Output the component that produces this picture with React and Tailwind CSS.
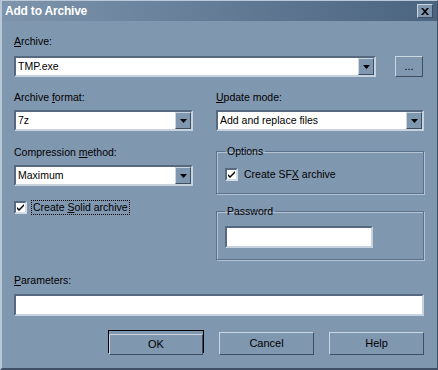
import { useState } from "react";

const font = { fontFamily: '"Liberation Sans", Arial, sans-serif' };

function Label({ children, className = "" }) {
  return (
    <div className={`h-[13px] leading-[13px] text-[10.5px] text-black ${className}`}>{children}</div>
  );
}

function Arrow() {
  return (
    <div className="w-[16px] h-full bg-[#8097b0] border border-t-[#c9d5e1] border-l-[#c9d5e1] border-b-[#3f4f62] border-r-[#3f4f62] flex items-center justify-center">
      <svg width="7" height="4" viewBox="0 0 7 4">
        <path d="M0 0h7L3.5 4z" fill="#000" />
      </svg>
    </div>
  );
}

function Combo({ value, className = "" }) {
  return (
    <div
      className={`h-[21px] bg-white border-2 border-t-[#56697f] border-l-[#56697f] border-b-[#c6d2de] border-r-[#c6d2de] flex items-stretch ${className}`}
    >
      <div className="flex-1 px-[2px] text-[10.5px] leading-[17px] text-black">{value}</div>
      <Arrow />
    </div>
  );
}

function TextBox({ className = "" }) {
  return (
    <div
      className={`h-[22px] bg-white border-2 border-t-[#56697f] border-l-[#56697f] border-b-[#c6d2de] border-r-[#c6d2de] ${className}`}
    />
  );
}

function Check({ checked, onChange }) {
  return (
    <button
      onClick={onChange}
      className="w-[13px] h-[13px] bg-white border-2 border-t-[#56697f] border-l-[#56697f] border-b-[#d2dce6] border-r-[#d2dce6] flex items-center justify-center"
    >
      {checked && (
        <svg width="9" height="9" viewBox="0 0 9 9">
          <path d="M1 4l2 2 5-5v2L3 8 1 6z" fill="#000" />
        </svg>
      )}
    </button>
  );
}

function Button({ children, isDefault }) {
  return (
    <div className={`h-[23px] ${isDefault ? "border border-black w-[96px]" : "w-[95px]"}`}>
      <button className="w-full h-full bg-[#8097b0] border border-t-[#c9d5e1] border-l-[#c9d5e1] border-b-[#3f4f62] border-r-[#3f4f62] text-[11px] text-black leading-none">
        {children}
      </button>
    </div>
  );
}

export default function App() {
  const [solid, setSolid] = useState(true);
  const [sfx, setSfx] = useState(true);

  return (
    <div
      style={font}
      className="w-[438px] h-[370px] bg-[#8097b0] flex flex-col border-l-2 border-t border-l-[#b9c8d8] border-t-[#b9c8d8] border-r border-r-[#3f5066] border-b-2 border-b-[#3f5066]"
    >
      <div className="h-[20px] shrink-0 bg-gradient-to-r from-[#7d94ac] to-[#4b6480] flex items-center justify-between pl-[3px] pr-[4px]">
        <span className="text-white font-bold text-[12px] tracking-[-0.2px]">Add to Archive</span>
        <div className="w-[16px] h-[14px] bg-[#8097b0] border border-t-[#c9d5e1] border-l-[#c9d5e1] border-b-[#3f4f62] border-r-[#3f4f62] flex items-center justify-center">
          <svg width="8" height="7" viewBox="0 0 8 7">
            <path d="M0 0h2l2 2.3L6 0h2L5 3.5 8 7H6L4 4.7 2 7H0l3-3.5z" fill="#000" />
          </svg>
        </div>
      </div>

      <div className="flex-1 pl-[12px] pr-[13px]">
        <Label className="mt-[14px]">
          <u>A</u>rchive:
        </Label>
        <div className="mt-[8px] flex items-center justify-between">
          <Combo value="TMP.exe" className="w-[362px]" />
          <div className="w-[28px] h-[21px] mr-[1px] bg-[#8097b0] border border-t-[#c9d5e1] border-l-[#c9d5e1] border-b-[#3f4f62] border-r-[#3f4f62] text-[11px] text-black flex items-center justify-center leading-none">
            ...
          </div>
        </div>

        <div className="grid grid-cols-[179px_208px] gap-x-[23px]">
          <div className="flex flex-col">
            <Label className="mt-[14px]">
              Archive <u>f</u>ormat:
            </Label>
            <Combo value="7z" className="mt-[6px]" />
            <Label className="mt-[15px]">
              Compression <u>m</u>ethod:
            </Label>
            <Combo value="Maximum" className="mt-[6px]" />
            <div className="mt-[14px] flex items-center gap-[4px] h-[15px]">
              <Check checked={solid} onChange={() => setSolid(!solid)} />
              <span className="text-[10.5px] leading-[13px] border border-dotted border-black px-[1px]">
                Create <u>S</u>olid archive
              </span>
            </div>
          </div>

          <div className="flex flex-col">
            <Label className="mt-[14px]">
              <u>U</u>pdate mode:
            </Label>
            <Combo value="Add and replace files" className="mt-[6px]" />

            <fieldset className="mt-[14px] border border-[#5b708a] shadow-[inset_1px_1px_0_#b5c4d3,1px_1px_0_#b5c4d3] pl-[8px] pb-[11px]">
              <legend className="px-[2px] text-[10.5px] leading-[13px] text-black">Options</legend>
              <div className="mt-[9px] flex items-center gap-[6px] h-[15px]">
                <Check checked={sfx} onChange={() => setSfx(!sfx)} />
                <span className="text-[10.5px] leading-[13px]">
                  Create SF<u>X</u> archive
                </span>
              </div>
            </fieldset>

            <fieldset className="mt-[11px] border border-[#5b708a] shadow-[inset_1px_1px_0_#b5c4d3,1px_1px_0_#b5c4d3] pl-[8px] pb-[11px]">
              <legend className="px-[2px] text-[10.5px] leading-[13px] text-black">Password</legend>
              <TextBox className="mt-[8px] w-[148px]" />
            </fieldset>
          </div>
        </div>

        <Label className="mt-[14px]">
          <u>P</u>arameters:
        </Label>
        <TextBox className="mt-[7px] w-[410px]" />

        <div className="mt-[14px] flex justify-end gap-[15px]">
          <Button isDefault>OK</Button>
          <Button>Cancel</Button>
          <Button>Help</Button>
        </div>
      </div>
    </div>
  );
}
